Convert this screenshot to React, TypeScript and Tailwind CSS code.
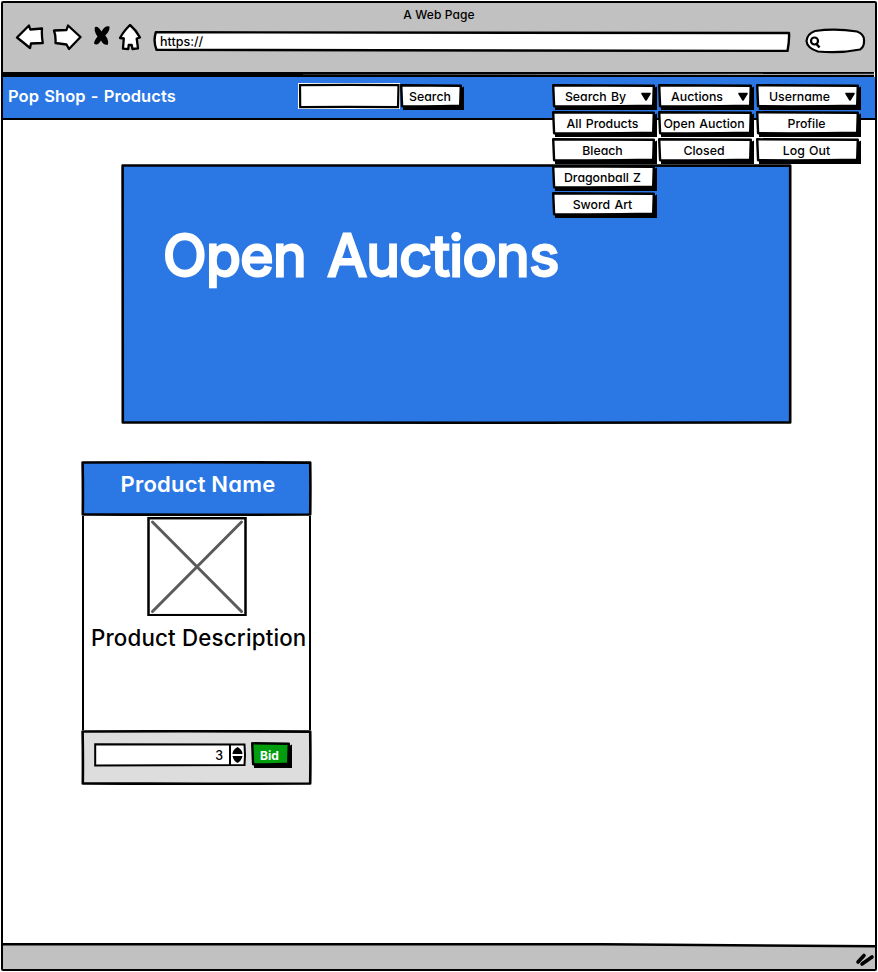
import type { ReactNode } from "react";

const sketchFont =
  "font-['Inter','Liberation_Sans',sans-serif] [font-feature-settings:'cv11','ss03']";

/** A slightly uneven rectangle, as if drawn by hand with a marker. */
function Outline({ w, h, fill, stroke = 2.6 }: { w: number; h: number; fill: string; stroke?: number }) {
  return (
    <svg className="absolute inset-0" width={w} height={h} viewBox={`0 0 ${w} ${h}`}>
      <path
        d={`M1.6 1.5 Q${w / 2} 1 ${w - 1.8} 1.6 Q${w - 1.4} ${h / 2} ${w - 1.8} ${h - 1.5} Q${w / 2} ${h - 1} 1.8 ${h - 1.6} Q2.1 ${h / 2} 1.6 1.5Z`}
        fill={fill}
        stroke="#000"
        strokeWidth={stroke}
        strokeLinejoin="round"
      />
    </svg>
  );
}

function SketchButton({
  w,
  children,
  caret = false,
  fill = "#fff",
  className = "text-[12.3px] [word-spacing:1px]",
}: {
  w: number;
  children: ReactNode;
  caret?: boolean;
  fill?: string;
  className?: string;
}) {
  return (
    <button className="relative block h-[27px] shrink-0" style={{ width: w }}>
      <svg className="absolute inset-0" width={w} height={27} viewBox={`0 0 ${w} 27`}>
        <path d={`M3 4H${w - 3}L${w} 2.5V26H3Z`} fill="#000" />
        <path
          d={`M1.2 1.3L${w - 3.2} 1.8L${w - 3.8} 21.6Q${w / 2} 22.8 2.1 22.2Z`}
          fill={fill}
          stroke="#000"
          strokeWidth="2.4"
          strokeLinejoin="round"
        />
        {caret && <path d={`M${w - 15} 9.5H${w - 7}L${w - 11} 16Z`} stroke="#000" strokeWidth="1.6" strokeLinejoin="round" />}
      </svg>
      <span
        className={`relative flex h-[25px] items-center justify-center whitespace-nowrap font-medium ${caret ? "pr-[18px]" : "pr-[4px]"} ${className}`}
      >
        {children}
      </span>
    </button>
  );
}

function Menu({ w, label, items }: { w: number; label: ReactNode; items: ReactNode[] }) {
  return (
    <div className="relative h-[27px]">
      <SketchButton w={w} caret>
        {label}
      </SketchButton>
      <div className="absolute left-0 top-full z-10">
        {items.map((item, i) => (
          <SketchButton key={i} w={w}>
            {item}
          </SketchButton>
        ))}
      </div>
    </div>
  );
}

function BrowserBar() {
  const line = { fill: "#fff", stroke: "#000", strokeWidth: 2.3, strokeLinejoin: "round" as const };
  return (
    <header className="h-[69px] bg-[#c1c1c1]">
      <div className="flex h-[21px] items-center justify-center pt-[3px] text-[12px] font-medium tracking-[0.1px]">
        A Web Page
      </div>
      <div className="flex">
        <svg className="ml-[12px]" width="30" height="28" viewBox="15 24 30 28">
          <path {...line} d="M17 37.5L29 25.5L30.3 29.5L42 28.5Q41.5 36 42.8 43L31 43.5L30 48Q24 43 17 37.5Z" />
        </svg>
        <svg className="ml-[7px]" width="30" height="28" viewBox="52 24 30 28">
          <path {...line} d="M54 30.5L66.5 30L68 25.5L80.5 37L69 49L66.5 44.5L55.5 43Q56 36 54 30.5Z" />
        </svg>
        <svg className="ml-[10px]" width="20" height="28" viewBox="92 24 20 28">
          <path d="M95 27Q98 25.5 101.5 31.5Q105 25 109.5 26.5Q110 31 105.3 35.5Q109 40 108 44.5Q104 46 101 40.5Q97.5 46.5 94 43.5Q94 41 97.5 36.5Q93.5 31 95 27Z" />
        </svg>
        <svg className="ml-[6px]" width="24" height="28" viewBox="118 24 24 28">
          <path {...line} d="M130 25Q136 30 140 37.5L136.7 38.5L138 48.3L132.5 49L131.7 45H128.7L128.3 49L123 48.7L123.8 38.5L120 38Q123 32 130 25Z" />
        </svg>
        <div className="relative ml-[11px] mt-[6px] h-[22px] w-[638px]">
          <svg className="absolute inset-0" width="638" height="22">
            <path d="M2.8 2.3L636 3Q636.5 10 634.5 21L3.5 19.8Q0 11 2.8 2.3Z" fill="#fff" stroke="#000" strokeWidth="2.4" strokeLinejoin="round" />
          </svg>
          <span className="relative ml-[7px] block text-[12.5px] font-medium leading-[23px]">https://</span>
        </div>
        <svg className="ml-[13px] mt-[4px]" width="62" height="26" viewBox="804 28 62 26">
          <path d="M815 31Q835 28 857 31.5Q864 34 864 40Q864.5 47 860 49.5Q840 53.5 818 51.5Q807 48 806.5 41Q807 34 815 31Z" fill="#fff" stroke="#000" strokeWidth="2.2" />
          <circle cx="814.5" cy="41" r="3.5" fill="none" stroke="#000" strokeWidth="2.2" />
          <path d="M816.5 44L819.5 47.5" stroke="#000" strokeWidth="2.5" />
        </svg>
      </div>
    </header>
  );
}

function NavBar() {
  return (
    <nav className="flex h-[43px] items-start border-b-[2.5px] border-black bg-[#2b78e4]">
      <h1 className="ml-[5px] w-[290px] text-[16.5px] font-semibold leading-[39px] tracking-[0.05px] text-white [word-spacing:1px]">
        Pop Shop - Products
      </h1>
      <div className="relative mt-[6px] h-[26px] w-[102px] bg-white">
        <svg className="absolute inset-0" width="102" height="26">
          <path d="M2 2.2Q50 1.4 100.5 2.2L100 24.2Q50 23.4 2.2 24.2Z" fill="#fff" stroke="#000" strokeWidth="2.2" />
        </svg>
      </div>
      <div className="mt-[7px]">
        <SketchButton w={64}>Search</SketchButton>
      </div>
      <div className="ml-[88px] mt-[7px] flex">
        <Menu w={105} label="Search By" items={["All Products", "Bleach", "Dragonball Z", "Sword Art"]} />
        <div className="ml-px">
          <Menu w={96} label="Auctions" items={["Open Auction", "Closed"]} />
        </div>
        <div className="ml-[2px]">
          <Menu w={105} label="Username" items={["Profile", "Log Out"]} />
        </div>
      </div>
    </nav>
  );
}

function ProductCard() {
  return (
    <article className="ml-[78px] mt-[37px] w-[231px]">
      <div className="relative h-[55px]">
        <Outline w={231} h={55} fill="#2b78e4" />
        <h3 className="relative pl-[3px] text-center text-[22px] font-semibold leading-[47px] tracking-[0.2px] text-white">
          Product Name
        </h3>
      </div>
      <div className="ml-px h-[214px] w-[229px] border-x-[2.5px] border-black bg-white">
        <div className="ml-[63px] h-[100px] w-[100px]">
          <svg width="100" height="100">
            <rect x="1.5" y="2.2" width="97" height="97" fill="#fff" stroke="#000" strokeWidth="2.5" />
            <path d="M5.5 6L94.5 95.5M94.5 6L5.5 95.5" stroke="#5b5b5b" strokeWidth="3" strokeLinecap="round" />
          </svg>
        </div>
        <p className="ml-[7px] whitespace-nowrap text-[22.3px] font-medium leading-[43px] tracking-[0.18px]">
          Product Description
        </p>
      </div>
      <div className="relative h-[55px]">
        <Outline w={231} h={55} fill="#ddd" />
        <div className="relative flex pl-[13px] pt-[13px]">
          <div className="relative flex h-[24px] w-[152px]">
            <svg className="absolute inset-0" width="152" height="24">
              <path d="M1.2 1.2L150.5 1.6L151 12L150.5 22L1.2 22.5Z" fill="#fff" stroke="#000" strokeWidth="2" />
              <path d="M136 1V23" stroke="#000" strokeWidth="2" />
              <path d="M143.5 4Q148.5 7 148.5 11H138.5Q138.5 7 143.5 4ZM138.5 13H148.5Q147.5 18 143.5 20Q139.5 18 138.5 13Z" />
            </svg>
            <span className="relative w-[129px] text-right text-[12.5px] font-medium leading-[25px]">3</span>
          </div>
          <div className="-mt-px ml-[5px]">
            <SketchButton w={41} fill="#009e0f" className="text-[12px] !font-bold text-white">
              Bid
            </SketchButton>
          </div>
        </div>
      </div>
    </article>
  );
}

export default function App() {
  return (
    <div className={`h-[972px] w-[878px] overflow-hidden bg-white p-px text-black ${sketchFont}`}>
      <div className="flex h-[970px] w-[876px] flex-col rounded-[2px] border-[2.5px] border-black">
        <BrowserBar />
        <svg className="block shrink-0" width="871" height="5">
          <path d="M0 0H871V5H0Z" />
          <path d="M300 2.6L871 1.7V2.9L300 2.8Z" fill="#a8a8a8" />
        </svg>
        <NavBar />
        <main className="grow">
          <section className="relative ml-[118px] mt-[44px] h-[260px] w-[671px]">
            <Outline w={671} h={260} fill="#2b78e4" />
            <h2 className="relative pl-[42px] pt-[56px] text-[57px] font-normal leading-[72px] tracking-[-0.6px] text-white [-webkit-text-stroke:2.8px_#fff] [stroke-linejoin:round] [word-spacing:6px]">
              Open Auctions
            </h2>
          </section>
          <ProductCard />
        </main>
        <footer className="relative h-[26px]">
          <svg className="block" width="872" height="26">
            <path d="M0 1.5L700 1.5L872 3V26H0Z" fill="#c1c1c1" />
            <path d="M0 1.3L600 1.3L872 3.2" fill="none" stroke="#000" strokeWidth="2.5" />
            <path d="M855 19L861 12.5M859 21L869 14" stroke="#000" strokeWidth="3.6" strokeLinecap="round" />
          </svg>
        </footer>
      </div>
    </div>
  );
}
